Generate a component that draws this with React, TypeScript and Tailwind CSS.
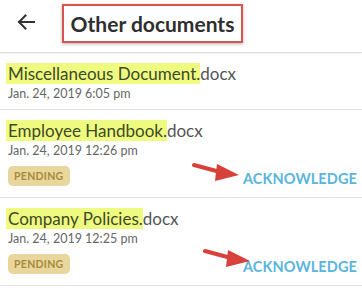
import React from "react";

const font = { fontFamily: '"Lato", "Open Sans", sans-serif' };

function Arrow({ className }: { className: string }) {
  return (
    <svg className={className} width="50" height="20" viewBox="0 0 50 20" fill="none">
      <path d="M2 3 L30 10.5" stroke="#d8403c" strokeWidth="4" strokeLinecap="round" />
      <path d="M25 2 L47 13 L23 19 Z" fill="#d8403c" />
    </svg>
  );
}

function Row({
  name,
  date,
  pending,
  arrowClass,
}: {
  name: string;
  date: string;
  pending?: boolean;
  arrowClass?: string;
}) {
  return (
    <div
      className={
        "relative border-b border-[#e3e3e3] pl-[6px] pr-[5px] pt-[9px] " + (pending ? "pb-[10px]" : "pb-[8px]")
      }
    >
      <div className="text-[17px] leading-[23px] text-[#3a3a3a]">
        <span className="bg-[#effb80] pl-[2px] text-[#3d4a28]">{name}.</span>
        <span className="text-[#555]">docx</span>
      </div>
      <div className="mt-[2px] pl-[2px] text-[12.5px] leading-[14px] text-[#666]">{date}</div>
      {pending && (
        <div className="mt-[8px] flex items-start justify-between">
          <span className="ml-[2px] rounded-[5px] bg-[#e9d69c] px-[6px] py-[3px] text-[10.5px] font-bold leading-[14px] tracking-[0.3px] text-[#a68a3a]">
            PENDING
          </span>
          <span className="mt-[4px] text-[14.5px] font-bold leading-[17px] tracking-[0.1px] text-[#5ab5dc]">
            ACKNOWLEDGE
          </span>
        </div>
      )}
      {arrowClass && <Arrow className={arrowClass} />}
    </div>
  );
}

export default function App() {
  return (
    <div className="h-[304px] w-[362px] overflow-hidden bg-white" style={font}>
      <div className="flex h-[53px] items-start border-b border-[#dcdcdc] shadow-[0_1px_2px_rgba(0,0,0,0.06)]">
        <svg className="ml-[17px] mt-[14px]" width="18" height="16" viewBox="0 0 18 16" fill="none">
          <path d="M17 8 H2 M8.5 1.5 L2 8 L8.5 14.5" stroke="#333" strokeWidth="2" strokeLinecap="square" />
        </svg>
        <div className="ml-[27px] mt-[4px] flex h-[39px] w-[181px] items-center justify-center border-2 border-[#d9534f] shadow-[0_1px_3px_rgba(0,0,0,0.3)]">
          <span className="text-[21px] font-bold text-[#2e2e2e]">Other documents</span>
        </div>
      </div>
      <Row name="Miscellaneous Document" date="Jan. 24, 2019 6:05 pm" />
      <Row
        name="Employee Handbook"
        date="Jan. 24, 2019 12:26 pm"
        pending
        arrowClass="absolute left-[192px] top-[52px]"
      />
      <Row
        name="Company Policies"
        date="Jan. 24, 2019 12:25 pm"
        pending
        arrowClass="absolute left-[203px] top-[50px]"
      />
    </div>
  );
}
